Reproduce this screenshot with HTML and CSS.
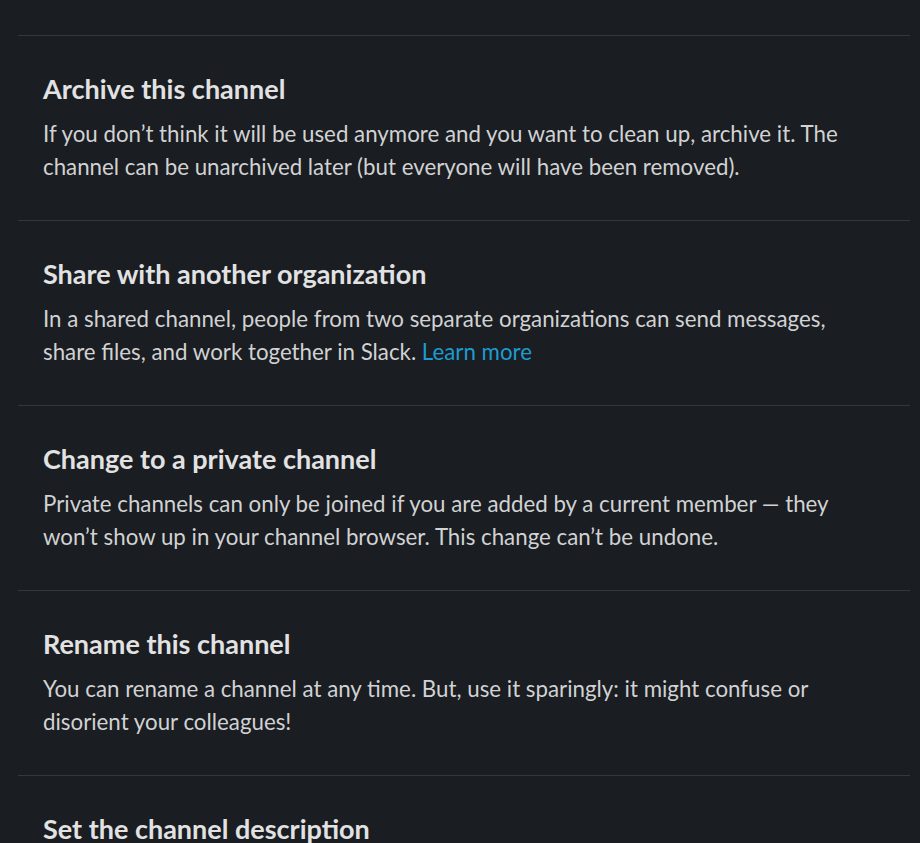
FILE: index.html
```html
<!DOCTYPE html>
<html lang="en">
<head>
    <meta charset="UTF-8">
    <meta name="viewport" content="width=device-width, initial-scale=1.0">
    <title>Channel settings</title>

    <link rel="stylesheet" href="styles.css">
</head>
<body>
    <div class="settings">
        <div class="setting">
            <h2>Archive this channel</h2>
            <p>If you don’t think it will be used anymore and you want to clean up, archive it. The channel can be unarchived later (but everyone will have been removed).</p>
        </div>

        <div class="setting">
            <h2>Share with another organization</h2>
            <p>In a shared channel, people from two separate organizations can send messages, share files, and work together in Slack. <a href="#">Learn more</a></p>
        </div>

        <div class="setting">
            <h2>Change to a private channel</h2>
            <p>Private channels can only be joined if you are added by a current member — they won’t show up in your channel browser. This change can’t be undone.</p>
        </div>

        <div class="setting">
            <h2>Rename this channel</h2>
            <p>You can rename a channel at any time. But, use it sparingly: it might confuse or disorient your colleagues!</p>
        </div>

        <div class="setting">
            <h2>Set the channel description</h2>
            <p>Let people know what this channel is for and how it should be used.</p>
        </div>
    </div>
</body>
</html>
```

FILE: styles.css
```css
html, body {
    margin: 0;
    height: 100%;
    overflow: hidden;
    background-color: #1a1d21;
}

body {
    font-family: Lato, "Noto Sans", sans-serif;
    color: #d1d2d3;
}

.settings {
    padding: 35px 10px 0 18px;
}

.setting {
    border-top: 1px solid #35373b;
    padding: 36px 45px 37px 25px;
}

h2 {
    margin: 0 0 11px;
    font-size: 27px;
    line-height: 34px;
    font-weight: bold;
    color: #e2e2e3;
}

p {
    margin: 0;
    font-size: 22.3px;
    line-height: 33px;
}

a {
    color: #1d9bd1;
    text-decoration: none;
}
```
